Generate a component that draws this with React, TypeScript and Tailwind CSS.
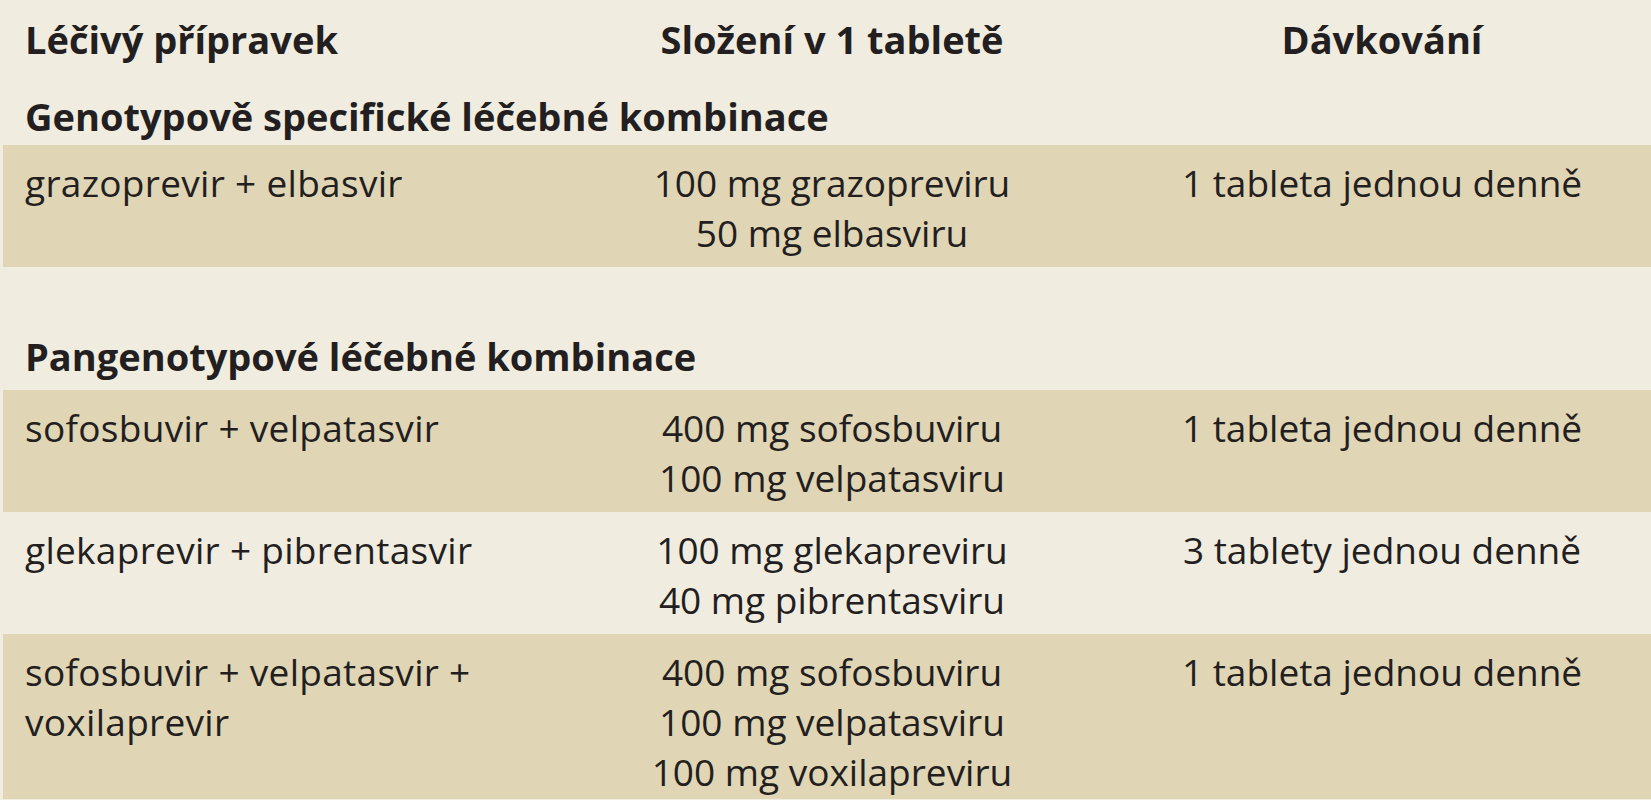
import React from "react";

type Row = {
  drug: string[];
  dose: string[];
  use: string;
  band: boolean;
};

const genoRows: Row[] = [
  {
    drug: ["grazoprevir + elbasvir"],
    dose: ["100 mg grazopreviru", "50 mg elbasviru"],
    use: "1 tableta jednou denně",
    band: true,
  },
];

const panRows: Row[] = [
  {
    drug: ["sofosbuvir + velpatasvir"],
    dose: ["400 mg sofosbuviru", "100 mg velpatasviru"],
    use: "1 tableta jednou denně",
    band: true,
  },
  {
    drug: ["glekaprevir + pibrentasvir"],
    dose: ["100 mg glekapreviru", "40 mg pibrentasviru"],
    use: "3 tablety jednou denně",
    band: false,
  },
  {
    drug: ["sofosbuvir + velpatasvir +", "voxilaprevir"],
    dose: ["400 mg sofosbuviru", "100 mg velpatasviru", "100 mg voxilapreviru"],
    use: "1 tableta jednou denně",
    band: true,
  },
];

function DataRow({ row, last }: { row: Row; last?: boolean }) {
  return (
    <div
      className={`grid grid-cols-[548px_562px_1fr] pt-[13px] ${
        last ? "min-h-[165px]" : "h-[122px]"
      } ${row.band ? "bg-[#e0d5b5]" : ""}`}
    >
      <div className="pl-[22px] tracking-[0.3px]">
        {row.drug.map((d, i) => (
          <div key={i}>{d}</div>
        ))}
      </div>
      <div className="text-center">
        {row.dose.map((d, i) => (
          <div key={i}>{d}</div>
        ))}
      </div>
      <div className="text-center">{row.use}</div>
    </div>
  );
}

export default function App() {
  return (
    <div
      className="w-[1651px] h-[800px] overflow-hidden bg-[#f1ece0] pl-[3px] text-[#231f20] text-[37px] leading-[50px]"
      style={{ fontFamily: '"Open Sans", "Noto Sans", sans-serif' }}
    >
      <div className="grid grid-cols-[548px_562px_1fr] h-[77px] pt-[14px] font-bold text-[38px]">
        <div className="pl-[22px]">Léčivý přípravek</div>
        <div className="text-center">Složení v 1 tabletě</div>
        <div className="text-center">Dávkování</div>
      </div>
      <div className="h-[68px] pt-[14px] pl-[22px] font-bold text-[38px]">
        Genotypově specifické léčebné kombinace
      </div>
      {genoRows.map((r, i) => (
        <DataRow key={i} row={r} />
      ))}
      <div className="h-[123px] pt-[64px] pl-[22px] font-bold text-[38px]">
        Pangenotypové léčebné kombinace
      </div>
      {panRows.map((r, i) => (
        <DataRow key={i} row={r} last={i === panRows.length - 1} />
      ))}
    </div>
  );
}
